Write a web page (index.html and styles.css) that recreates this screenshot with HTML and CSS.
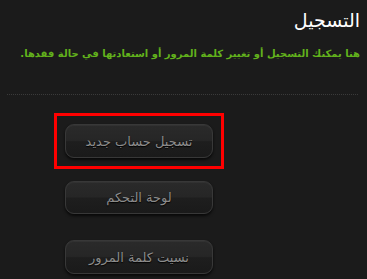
FILE: index.html
```html
<!DOCTYPE html>
<html lang="ar">
<head>
<meta charset="utf-8">
<link rel="stylesheet" href="styles.css">
</head>
<body>
<div class="page">
  <h1 class="title">التسجيل</h1>
  <p class="intro">هنا يمكنك التسجيل أو تغيير كلمة المرور أو استعادتها في حالة فقدها.</p>
  <div class="divider"></div>
  <div class="actions">
    <div class="highlight">
      <a class="btn" href="#">تسجيل حساب جديد</a>
    </div>
    <a class="btn btn-second" href="#">لوحة التحكم</a>
    <a class="btn btn-third" href="#">نسيت كلمة المرور</a>
  </div>
</div>
</body>
</html>
```
FILE: styles.css
```css
html, body {
  margin: 0;
  padding: 0;
  background: #1b1b1b;
  height: 100%;
  overflow: hidden;
}
.page {
  font-family: "DejaVu Sans", "Noto Sans", sans-serif;
  padding: 8px 7px 0 7px;
}
.title {
  direction: rtl;
  margin: 0;
  font-size: 19px;
  font-weight: normal;
  color: #ffffff;
  line-height: 24px;
}
.intro {
  direction: rtl;
  margin: 14px 0 0 0;
  font-size: 10px;
  font-weight: bold;
  color: #62b21c;
  line-height: 16px;
  white-space: nowrap;
}
.divider {
  margin-top: 32px;
  margin-right: 2px;
  border-top: 1px dotted #3a3a3a;
  height: 0;
}
.actions {
  display: flex;
  flex-direction: column;
  align-items: center;
  width: 170px;
  margin-left: 47px;
  padding-top: 18px;
}
.highlight {
  border: 3px solid #ff0000;
  padding: 8px;
}
.btn {
  direction: rtl;
  box-sizing: border-box;
  width: 148px;
  height: 34px;
  display: flex;
  align-items: center;
  justify-content: center;
  border-radius: 9px;
  border: 1px solid #383838;
  background: linear-gradient(to bottom, #2a2a2a 0%, #262626 48%, #1e1e1e 52%, #1a1a1a 100%);
  box-shadow: 0 2px 3px rgba(0,0,0,0.7), inset 0 1px 0 rgba(255,255,255,0.04);
  color: #8c8c8c;
  text-decoration: none;
  font-size: 13px;
  font-weight: normal;
  text-shadow: 0 1px 1px #000;
}
.btn-second {
  margin-top: 12px;
  height: 33px;
}
.btn-third {
  margin-top: 26px;
}
```
